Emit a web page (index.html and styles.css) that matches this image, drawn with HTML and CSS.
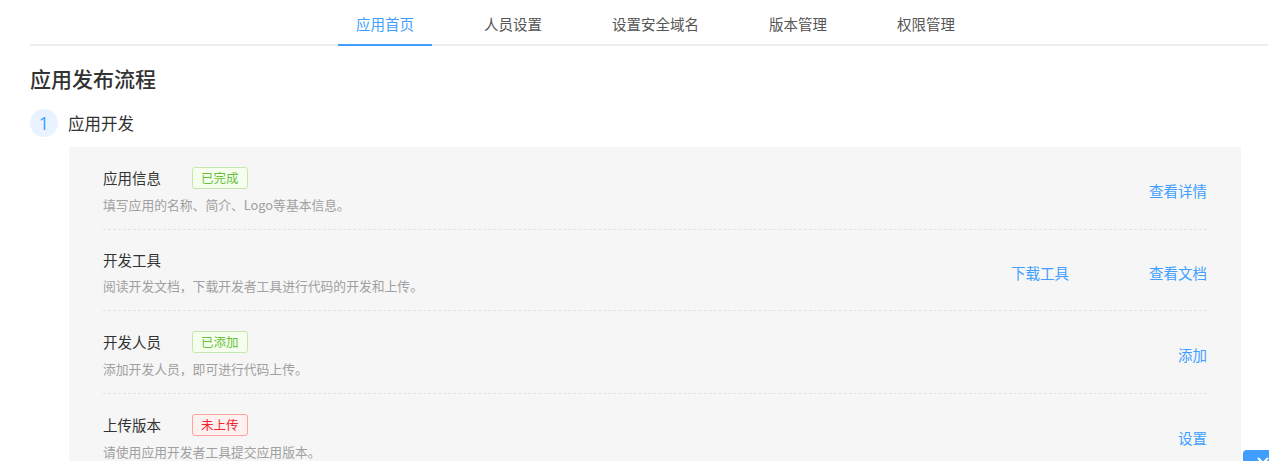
FILE: index.html
```html
<!DOCTYPE html>
<html lang="zh-CN">
<head>
    <meta charset="UTF-8">
    <meta name="viewport" content="width=device-width, initial-scale=1.0">
    <title>应用首页</title>
    <link rel="stylesheet" href="styles.css">
</head>
<body>
    <div class="page">
        <div class="tabs">
            <div class="tab active">应用首页</div>
            <div class="tab">人员设置</div>
            <div class="tab">设置安全域名</div>
            <div class="tab">版本管理</div>
            <div class="tab">权限管理</div>
        </div>

        <h1 class="page-title">应用发布流程</h1>

        <div class="step">
            <span class="step-num">1</span>
            <span class="step-title">应用开发</span>
        </div>

        <div class="step-box">
            <div class="row">
                <div class="info">
                    <div class="row-head">
                        <span class="row-title">应用信息</span>
                        <span class="tag tag-success">已完成</span>
                    </div>
                    <p class="row-desc">填写应用的名称、简介、Logo等基本信息。</p>
                </div>
                <div class="actions">
                    <a class="link">查看详情</a>
                </div>
            </div>
            <div class="row">
                <div class="info">
                    <div class="row-head">
                        <span class="row-title">开发工具</span>
                    </div>
                    <p class="row-desc">阅读开发文档，下载开发者工具进行代码的开发和上传。</p>
                </div>
                <div class="actions">
                    <a class="link">下载工具</a>
                    <a class="link">查看文档</a>
                </div>
            </div>
            <div class="row">
                <div class="info">
                    <div class="row-head">
                        <span class="row-title">开发人员</span>
                        <span class="tag tag-success">已添加</span>
                    </div>
                    <p class="row-desc">添加开发人员，即可进行代码上传。</p>
                </div>
                <div class="actions">
                    <a class="link">添加</a>
                </div>
            </div>
            <div class="row">
                <div class="info">
                    <div class="row-head">
                        <span class="row-title">上传版本</span>
                        <span class="tag tag-danger">未上传</span>
                    </div>
                    <p class="row-desc">请使用应用开发者工具提交应用版本。</p>
                </div>
                <div class="actions">
                    <a class="link">设置</a>
                </div>
            </div>
        </div>
    </div>

    <div class="float-btn">
        <svg width="16" height="16" viewBox="0 0 16 16"><path d="M3 4l5 5 5-5" fill="none" stroke="#fff" stroke-width="2"/></svg>
    </div>
</body>
</html>
```

FILE: styles.css
```css
body {
    margin: 0;
    font-family: "Noto Sans CJK SC", "Noto Sans", sans-serif;
    color: #303133;
    background: #fff;
    overflow: hidden;
}
.page {
    padding: 0 1px 0 30px;
}
.tabs {
    display: flex;
    justify-content: center;
    padding-left: 13px;
    border-bottom: 2px solid #eeeeee;
    height: 44px;
}
.tab {
    padding: 4px 18px 0;
    margin: 0 17px -2px;
    line-height: 40px;
    font-size: 14.5px;
    color: #555;
    border-bottom: 2px solid transparent;
    cursor: pointer;
}
.tab.active {
    color: #409eff;
    border-bottom-color: #409eff;
}
.page-title {
    margin: 17px 0 0;
    font-size: 21px;
    line-height: 30px;
    font-weight: 500;
    color: #333;
}
.step {
    display: flex;
    align-items: center;
    margin-top: 16px;
}
.step-num {
    width: 28px;
    height: 28px;
    border-radius: 50%;
    background: #e8f3ff;
    color: #409eff;
    font-size: 18px;
    font-family: "Open Sans", sans-serif;
    display: flex;
    align-items: center;
    justify-content: center;
}
.step-title {
    margin-left: 10px;
    font-size: 16.5px;
    color: #333;
}
.step-box {
    margin: 10px 27px 0 39px;
    padding: 0 34px;
    background: #f6f6f6;
}
.row {
    display: flex;
    align-items: center;
    padding: 20px 0 16px;
    border-bottom: 1px dashed #e2e2e2;
}
.info {
    flex: 1;
}
.row-head {
    display: flex;
    align-items: center;
    min-height: 20px;
}
.row-title {
    font-size: 14.5px;
    line-height: 20px;
    color: #333;
    width: 89px;
}
.tag {
    height: 20px;
    line-height: 20px;
    padding: 0 8px;
    font-size: 12.5px;
    border-radius: 3px;
    border: 1px solid;
}
.tag-success {
    color: #67c23a;
    background: #f6ffed;
    border-color: #c2e7b0;
}
.tag-danger {
    color: #f5222d;
    background: #fff1f0;
    border-color: #ffa39e;
}
.row-desc {
    margin: 8px 0 0;
    font-size: 12.8px;
    line-height: 16px;
    color: #a0a0a0;
}
.actions {
    display: flex;
    gap: 80px;
}
.link {
    font-size: 14.5px;
    color: #409eff;
    cursor: pointer;
}
.float-btn {
    position: fixed;
    left: 1243px;
    top: 450px;
    width: 40px;
    height: 40px;
    border-radius: 4px;
    background: #409eff;
    display: flex;
    justify-content: center;
    padding-top: 4px;
    box-sizing: border-box;
}
```
